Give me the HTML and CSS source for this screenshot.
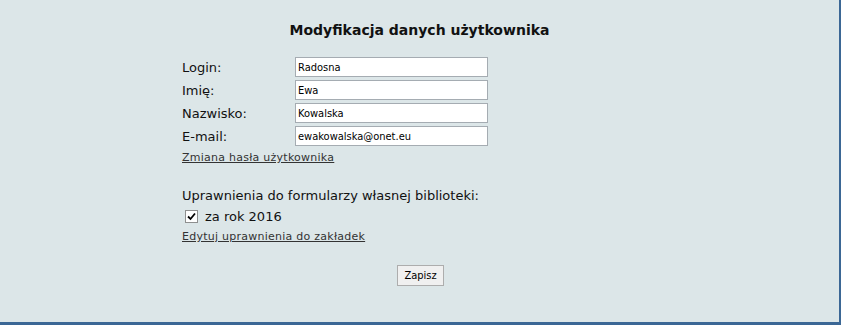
FILE: index.html
```html
<!DOCTYPE html>
<html lang="pl">
<head>
    <meta charset="UTF-8">
    <title>Modyfikacja danych użytkownika</title>
    <link rel="stylesheet" href="styles.css">
</head>
<body>
    <div class="page">
        <h1>Modyfikacja danych użytkownika</h1>
        <form class="user-form">
            <div class="form-body">
                <div class="fields">
                    <label for="login">Login:</label>
                    <input type="text" id="login" value="Radosna">
                    <label for="imie">Imię:</label>
                    <input type="text" id="imie" value="Ewa">
                    <label for="nazwisko">Nazwisko:</label>
                    <input type="text" id="nazwisko" value="Kowalska">
                    <label for="email">E-mail:</label>
                    <input type="text" id="email" value="ewakowalska@onet.eu">
                </div>
                <a class="link" href="#">Zmiana hasła użytkownika</a>

                <p class="section-title">Uprawnienia do formularzy własnej biblioteki:</p>
                <label class="check">
                    <span class="check-box">
                        <svg width="9" height="9" viewBox="0 0 9 9">
                            <path d="M1 4.5 L3.5 7 L8 1.5" fill="none" stroke="#000" stroke-width="1.8"/>
                        </svg>
                    </span>
                    <span>za rok 2016</span>
                </label>
                <a class="link" href="#">Edytuj uprawnienia do zakładek</a>
            </div>

            <div class="actions">
                <button type="submit">Zapisz</button>
            </div>
        </form>
    </div>
</body>
</html>
```

FILE: styles.css
```css
* {
    box-sizing: border-box;
    margin: 0;
    padding: 0;
}

body {
    font-family: 'DejaVu Sans', Verdana, sans-serif;
    font-size: 13px;
    color: #111;
    background-color: #ffffff;
}

.page {
    width: 841px;
    height: 325px;
    background-color: #dce6e8;
    border-right: 2px solid #3b6795;
    border-bottom: 3px solid #3b6795;
    padding-top: 22px;
}

h1 {
    font-size: 14px;
    font-weight: 700;
    text-align: center;
    color: #111;
    margin-bottom: 19px;
}

.form-body {
    margin-left: 182px;
    width: 320px;
}

.fields {
    display: grid;
    grid-template-columns: 113px 193px;
    row-gap: 3px;
    align-items: center;
}

.fields input {
    height: 20px;
    border: 1px solid #a5acb2;
    background: #fff;
    font-family: 'DejaVu Sans Condensed', 'DejaVu Sans', sans-serif;
    font-size: 11px;
    padding: 0 2px;
    color: #000;
}

.link {
    display: inline-block;
    color: #333;
    font-size: 11px;
    letter-spacing: 0.25px;
    text-decoration: underline;
    margin-top: 5px;
}

.section-title {
    margin-top: 24px;
}

.check {
    display: flex;
    align-items: center;
    gap: 7px;
    margin-top: 6px;
    margin-left: 3px;
}

.check-box {
    display: flex;
    align-items: center;
    justify-content: center;
    width: 13px;
    height: 13px;
    border: 1px solid #8e8f8f;
    background: #fff;
}

.check + .link {
    margin-top: 6px;
}

.actions {
    margin-top: 22px;
    padding-left: 2px;
    text-align: center;
}

button {
    font-family: 'DejaVu Sans Condensed', 'DejaVu Sans', sans-serif;
    font-size: 11px;
    height: 21px;
    padding: 0 6px;
    background: #f0f0f0;
    border: 1px solid #adadad;
    color: #000;
}
```
